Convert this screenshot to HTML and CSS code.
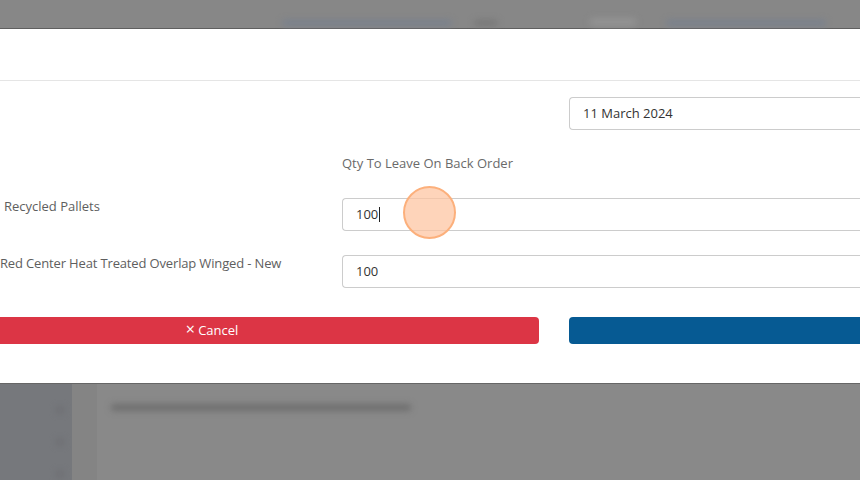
FILE: index.html
```html
<!DOCTYPE html>
<html>
<head>
<meta charset="utf-8">
<link rel="stylesheet" href="styles.css">
</head>
<body>
<div class="topbar">
  <span class="blur b1"></span>
  <span class="blur b2"></span>
  <span class="blur b3"></span>
  <span class="blur b4"></span>
</div>
<div class="modal">
  <div class="modal-header"></div>
  <div class="modal-body">
    <div class="date-row">
      <div class="input date">11 March 2024</div>
    </div>
    <div class="qty-row">
      <div class="qty-label">Qty To Leave On Back Order</div>
    </div>
    <div class="item-row">
      <div class="item-label first">Recycled Pallets</div>
      <div class="input qty">100<span class="caret"></span></div>
    </div>
    <div class="item-row">
      <div class="item-label second">Red Center Heat Treated Overlap Winged - New</div>
      <div class="input qty">100</div>
    </div>
    <div class="buttons">
      <div class="btn cancel"><span class="x">×</span> Cancel</div>
      <div class="btn save"></div>
    </div>
  </div>
  <div class="click"></div>
</div>
<div class="below">
  <div class="sidebar">
    <span class="dot"></span>
    <span class="dot"></span>
    <span class="dot"></span>
  </div>
  <div class="band"></div>
  <div class="content">
    <span class="blur t1"></span>
  </div>
</div>
</body>
</html>
```
FILE: styles.css
```css
html, body {
  margin: 0;
  padding: 0;
}
body {
  width: 860px;
  height: 480px;
  overflow: hidden;
  background: #898989;
  font-family: "Open Sans", "Liberation Sans", sans-serif;
  font-size: 13px;
}
.topbar {
  height: 29px;
  background: #878787;
  display: flex;
  align-items: flex-end;
  border-bottom: 1px solid #5f5f5f;
  box-sizing: border-box;
}
.blur {
  display: block;
  filter: blur(3px);
  height: 6px;
  border-radius: 3px;
}
.b1 { width: 170px; margin: 0 0 2px 282px; background: #78808d; }
.b2 { width: 24px; margin: 0 0 2px 22px; background: #777; }
.b3 { width: 46px; margin: 0 0 2px 92px; background: #939393; height: 8px; }
.b4 { width: 160px; margin: 0 0 2px 30px; background: #78808d; }

.modal {
  position: relative;
  background: #fff;
  height: 355px;
  border-bottom: 1px solid #666;
  box-sizing: border-box;
}
.modal-header {
  height: 52px;
  border-bottom: 1px solid #e5e5e5;
  box-sizing: border-box;
}
.modal-body {
  padding-top: 16px;
}
.input {
  height: 33px;
  box-sizing: border-box;
  border: 1px solid #cccccc;
  border-radius: 4px;
  color: #333;
  padding-left: 13px;
  line-height: 31px;
  display: flex;
  align-items: center;
}
.date-row {
  display: flex;
  padding-left: 569px;
}
.date {
  flex: 1;
  border-right: none;
  border-radius: 4px 0 0 4px;
}
.qty-row {
  padding: 24px 0 0 342px;
  height: 46px;
  box-sizing: border-box;
}
.qty-label {
  color: #6a6a6a;
  line-height: 18px;
}
.item-row {
  display: flex;
  align-items: flex-start;
  margin-top: 22px;
}
.item-row + .item-row {
  margin-top: 24px;
}
.item-label {
  width: 342px;
  color: #5e5e5e;
  line-height: 18px;
  flex: none;
}
.item-label.first { padding-left: 4px; margin-top: -1px; box-sizing: border-box; }
.item-label.second { margin-top: -1px; letter-spacing: -0.15px; }
.qty {
  flex: 1;
  border-right: none;
  border-radius: 4px 0 0 4px;
}
.caret {
  display: inline-block;
  width: 1px;
  height: 15px;
  background: #222;
  margin-left: 1px;
}
.buttons {
  display: flex;
  gap: 30px;
  margin-top: 29px;
}
.btn {
  height: 27px;
  line-height: 26px;
  color: #fff;
  text-align: center;
}
.x {
  font-size: 16px;
  line-height: 10px;
}
.cancel {
  width: 539px;
  background: #dc3545;
  border-radius: 0 4px 4px 0;
  padding-right: 115px;
  box-sizing: border-box;
}
.save {
  flex: 1;
  background: #065a93;
  border-radius: 4px 0 0 4px;
}
.click {
  position: absolute;
  left: 403px;
  top: 157px;
  width: 49px;
  height: 49px;
  border-radius: 50%;
  background: rgba(253, 196, 160, 0.72);
  border: 2px solid #fcb07c;
}
.below {
  display: flex;
  height: 97px;
}
.sidebar {
  width: 72px;
  background: #76787c;
  display: flex;
  flex-direction: column;
  align-items: flex-end;
  padding: 22px 8px 0 0;
  box-sizing: border-box;
  gap: 24px;
}
.dot {
  width: 8px;
  height: 8px;
  border-radius: 50%;
  background: #6e6f73;
  filter: blur(3px);
}
.band {
  width: 25px;
  background: #848484;
}
.content {
  flex: 1;
  padding: 20px 0 0 14px;
}
.t1 {
  width: 300px;
  height: 7px;
  background: #6e6e6e;
}
```
